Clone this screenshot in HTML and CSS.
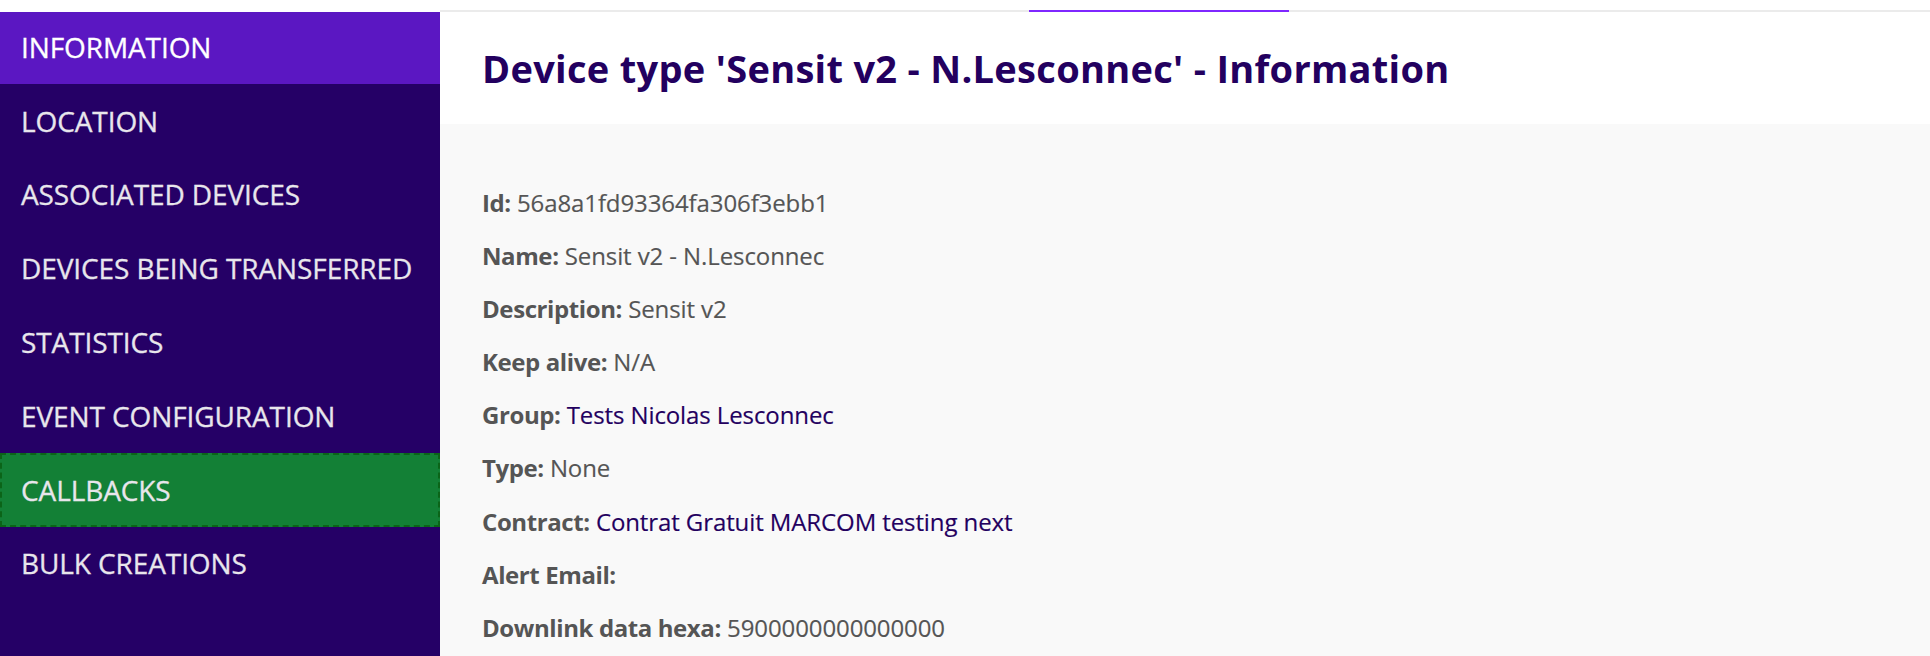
FILE: index.html
```html
<!DOCTYPE html>
<html lang="en">
<head>
<meta charset="utf-8">
<title>Device type - Information</title>
<link rel="stylesheet" href="styles.css">
</head>
<body>
<div class="topgap"></div>
<div class="layout">
  <nav class="sidebar">
    <a class="nav-item active">INFORMATION</a>
    <a class="nav-item">LOCATION</a>
    <a class="nav-item">ASSOCIATED DEVICES</a>
    <a class="nav-item">DEVICES BEING TRANSFERRED</a>
    <a class="nav-item">STATISTICS</a>
    <a class="nav-item">EVENT CONFIGURATION</a>
    <a class="nav-item focus">CALLBACKS</a>
    <a class="nav-item">BULK CREATIONS</a>
  </nav>
  <main class="content">
    <div class="tabline"><div class="tabline-active"></div></div>
    <header class="header">
      <h1 class="title">Device type 'Sensit v2 - N.Lesconnec' - Information</h1>
    </header>
    <section class="details">
      <p class="row"><span class="label">Id:</span> 56a8a1fd93364fa306f3ebb1</p>
      <p class="row"><span class="label">Name:</span> Sensit v2 - N.Lesconnec</p>
      <p class="row"><span class="label">Description:</span> Sensit v2</p>
      <p class="row"><span class="label">Keep alive:</span> N/A</p>
      <p class="row"><span class="label">Group:</span> <a class="link">Tests Nicolas Lesconnec</a></p>
      <p class="row"><span class="label">Type:</span> None</p>
      <p class="row"><span class="label">Contract:</span> <a class="link">Contrat Gratuit MARCOM testing next</a></p>
      <p class="row"><span class="label">Alert Email:</span></p>
      <p class="row"><span class="label">Downlink data hexa:</span> 5900000000000000</p>
    </section>
  </main>
</div>
</body>
</html>
```
FILE: styles.css
```css
html, body {
  margin: 0;
  padding: 0;
  height: 100%;
  overflow: hidden;
  background: #ffffff;
  font-family: "Open Sans", "DejaVu Sans", sans-serif;
}

.topgap {
  height: 10px;
}

.layout {
  display: flex;
  align-items: stretch;
  height: calc(100% - 10px);
}

.sidebar {
  width: 440px;
  flex: 0 0 440px;
  margin-top: 2px;
  background: #250066;
  display: flex;
  flex-direction: column;
}

.nav-item {
  box-sizing: border-box;
  flex: 0 0 73.8px;
  display: flex;
  align-items: center;
  padding-left: 21px;
  padding-bottom: 0;
  font-size: 28px;
  font-weight: 400;
  -webkit-text-stroke: 0.3px currentColor;
  color: #e8e6ec;
  letter-spacing: -0.1px;
  text-decoration: none;
  white-space: nowrap;
}

.nav-item:first-child {
  flex-basis: 71.8px;
  padding-bottom: 1px;
}

.nav-item.active {
  background: #5b17c2;
  color: #ffffff;
}

.nav-item.focus {
  background: #138036;
  border: 2px dashed #0b6418;
  padding-left: 19px;
}

.content {
  flex: 1 1 auto;
  display: flex;
  flex-direction: column;
  min-width: 0;
}

.tabline {
  height: 2px;
  background: #ebebeb;
  overflow: visible;
}

.tabline-active {
  margin-left: 589px;
  width: 260px;
  height: 4px;
  background: #7f27ff;
}

.header {
  height: 112px;
  background: #ffffff;
  display: flex;
  align-items: center;
  padding-left: 42px;
}

.title {
  margin: 0;
  font-size: 38px;
  font-weight: 700;
  color: #23005f;
  letter-spacing: 0.3px;
  white-space: nowrap;
}

.details {
  flex: 1 1 auto;
  background: #f9f9f9;
  padding: 52px 0 0 42px;
}

.row {
  margin: 0;
  height: 53.1px;
  line-height: 53.1px;
  font-size: 24px;
  color: #555555;
  letter-spacing: -0.1px;
  white-space: nowrap;
  -webkit-text-stroke: 0.15px currentColor;
}

.label {
  font-weight: 700;
  letter-spacing: -0.4px;
  -webkit-text-stroke: 0;
}

.link {
  color: #23005f;
  text-decoration: none;
}
```
